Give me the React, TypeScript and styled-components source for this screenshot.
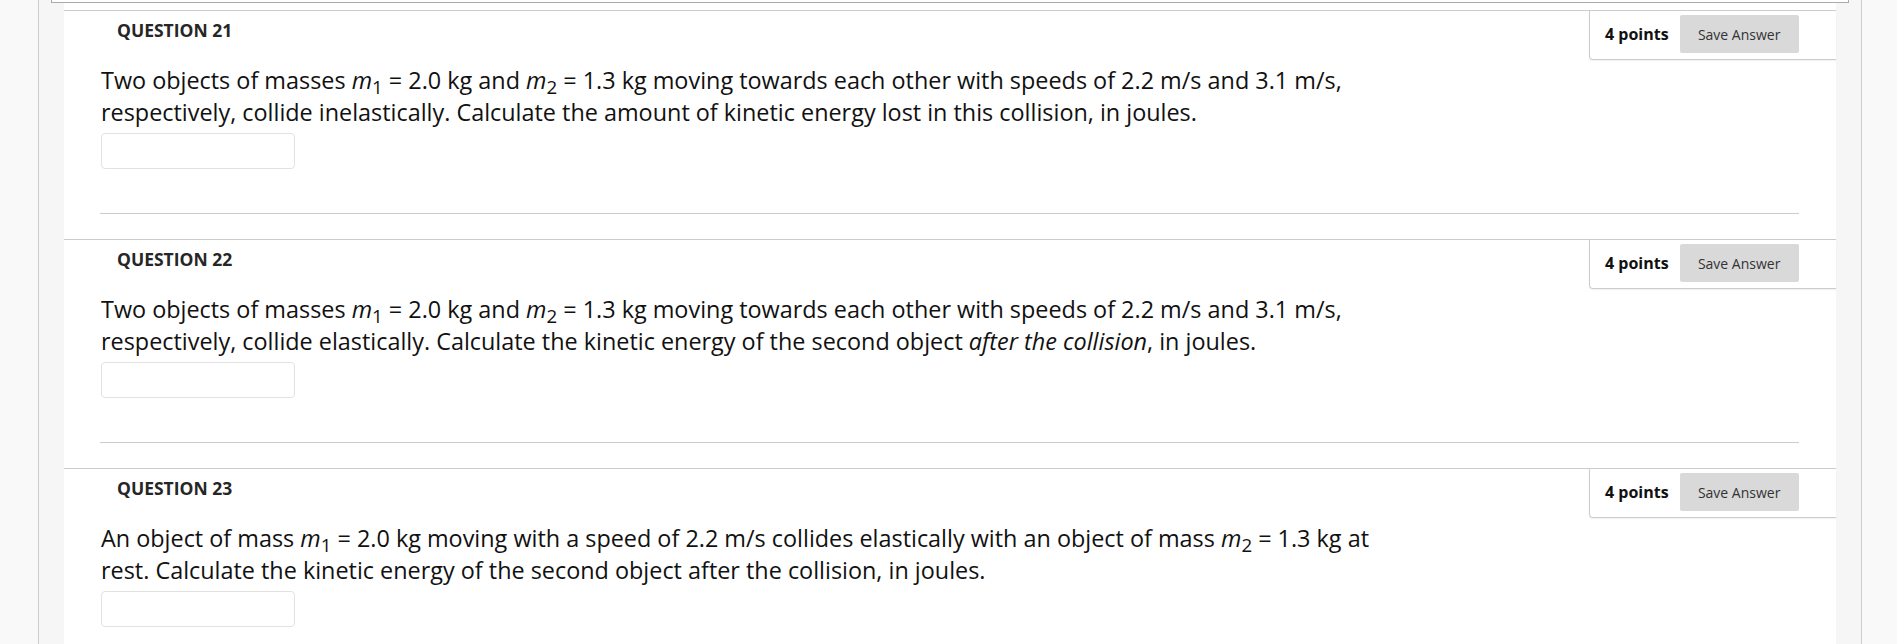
import React from "react";
import styled, { createGlobalStyle } from "styled-components";

const GlobalStyle = createGlobalStyle`
  html, body {
    margin: 0;
    padding: 0;
    background: #f9f9f9;
    font-family: "Open Sans", "Liberation Sans", sans-serif;
    overflow: hidden;
  }
`;

const Page = styled.div`
  height: 100vh;
  background: #f9f9f9;
  overflow: hidden;
`;

const Column = styled.div`
  margin-left: 38px;
  width: 1822px;
  height: 100%;
  background: #f6f6f6;
  border-left: 1px solid #cccccc;
  border-right: 1px solid #cccccc;
`;

const TopBox = styled.div`
  margin: 0 12px;
  height: 2px;
  border: 1px solid #aaaaaa;
  border-top: none;
  background: #ffffff;
`;

const Panel = styled.div`
  margin: 0 25px;
  padding-top: 7px;
  background: #ffffff;
  height: 100%;
`;

const Section = styled.section`
  border-top: 1px solid #cccccc;
  height: 228px;
`;

const Header = styled.div`
  display: flex;
  justify-content: space-between;
  align-items: flex-start;
  height: 50px;
`;

const Title = styled.h3`
  margin: 0;
  padding: 7px 0 0 53px;
  font-size: 17.5px;
  font-weight: 700;
  color: #262626;
`;

const PointsBox = styled.div`
  display: flex;
  align-items: center;
  gap: 11px;
  width: 247px;
  box-sizing: border-box;
  height: 49px;
  padding: 0 37px 2px 15px;
  border-left: 1px solid #cccccc;
  border-bottom: 1px solid #cccccc;
  border-bottom-left-radius: 4px;
  box-shadow: 0 1px 2px rgba(0, 0, 0, 0.06);
`;

const Points = styled.span`
  font-size: 16px;
  font-weight: 700;
  color: #111111;
  white-space: nowrap;
`;

const SaveButton = styled.button`
  flex-shrink: 0;
  width: 119px;
  height: 38px;
  border: none;
  border-radius: 2px;
  background: #d9d9d9;
  color: #333333;
  font-family: "Open Sans", "Liberation Sans", sans-serif;
  font-size: 14px;
  padding: 0;
  cursor: pointer;
`;

const Body = styled.div`
  padding: 3px 37px 0 37px;
`;

const Prompt = styled.p`
  margin: 0;
  max-width: 1310px;
  font-size: 23.4px;
  line-height: 32px;
  color: #111111;
`;

const Var = styled.i`
  font-style: italic;
`;

const Sub = styled.sub`
  font-size: 0.8em;
  line-height: 0;
  vertical-align: -5px;
`;

const AnswerInput = styled.input`
  display: block;
  margin-top: 5px;
  width: 194px;
  height: 36px;
  box-sizing: border-box;
  border: 1px solid #e2e2e2;
  border-radius: 4px;
  background: #ffffff;
  outline: none;
`;

const Divider = styled.hr`
  margin: 44px 37px 0 36px;
  border: none;
  border-top: 1px solid #cccccc;
`;

const M = ({ n }: { n: number }) => (
  <>
    <Var>m</Var>
    <Sub>{n}</Sub>
  </>
);

type Q = { num: number; text: React.ReactNode };

const questions: Q[] = [
  {
    num: 21,
    text: (
      <>
        Two objects of masses <M n={1} /> = 2.0 kg and <M n={2} /> = 1.3 kg
        moving towards each other with speeds of 2.2 m/s and 3.1 m/s,
        respectively, collide inelastically. Calculate the amount of kinetic
        energy lost in this collision, in joules.
      </>
    ),
  },
  {
    num: 22,
    text: (
      <>
        Two objects of masses <M n={1} /> = 2.0 kg and <M n={2} /> = 1.3 kg
        moving towards each other with speeds of 2.2 m/s and 3.1 m/s,
        respectively, collide elastically. Calculate the kinetic energy of the
        second object <i>after the collision</i>, in joules.
      </>
    ),
  },
  {
    num: 23,
    text: (
      <>
        An object of mass <M n={1} /> = 2.0 kg moving with a speed of 2.2 m/s
        collides elastically with an object of mass <M n={2} /> = 1.3 kg at
        rest. Calculate the kinetic energy of the second object after the
        collision, in joules.
      </>
    ),
  },
];

export default function App() {
  return (
    <Page>
      <GlobalStyle />
      <Column>
        <TopBox />
        <Panel>
          {questions.map((q) => (
            <Section key={q.num}>
              <Header>
                <Title>QUESTION {q.num}</Title>
                <PointsBox>
                  <Points>4 points</Points>
                  <SaveButton type="button">Save Answer</SaveButton>
                </PointsBox>
              </Header>
              <Body>
                <Prompt>{q.text}</Prompt>
                <AnswerInput type="text" />
              </Body>
              <Divider />
            </Section>
          ))}
        </Panel>
      </Column>
    </Page>
  );
}
